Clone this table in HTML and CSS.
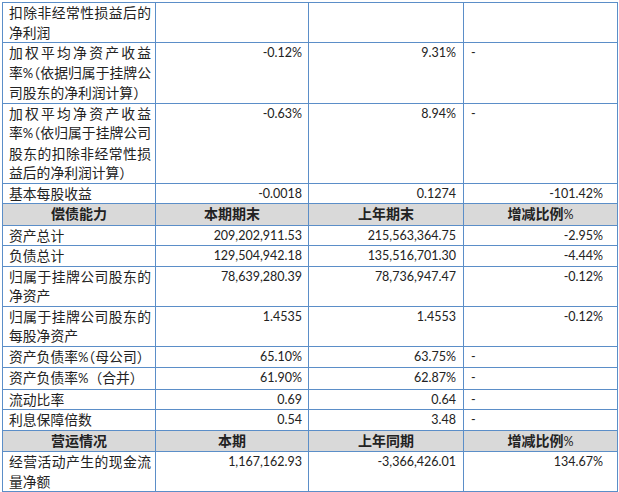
FILE: index.html
```html
<!DOCTYPE html>
<html lang="zh-CN">
<head>
<meta charset="utf-8">
<title>主要财务数据</title>
<link rel="stylesheet" href="styles.css">
</head>
<body>
<table class="fin">
  <colgroup><col class="c1"><col class="c2"><col class="c3"><col class="c4"></colgroup>
  <tbody>
    <tr>
      <td class="lbl"><span class="ln j">扣除非经常性损益后的</span><span class="ln">净利润</span></td>
      <td class="n"></td><td class="n"></td><td class="d"></td>
    </tr>
    <tr>
      <td class="lbl"><span class="ln j">加权平均净资产收益</span><span class="ln j">率<span class="pc">%</span><span class="half">（</span>依据归属于挂牌公</span><span class="ln">司股东的净利润计算）</span></td>
      <td class="n">-0.12%</td><td class="n">9.31%</td><td class="d">-</td>
    </tr>
    <tr>
      <td class="lbl"><span class="ln j">加权平均净资产收益</span><span class="ln j">率<span class="pc">%</span><span class="half">（</span>依归属于挂牌公司</span><span class="ln j">股东的扣除非经常性损</span><span class="ln">益后的净利润计算）</span></td>
      <td class="n">-0.63%</td><td class="n">8.94%</td><td class="d">-</td>
    </tr>
    <tr>
      <td class="lbl">基本每股收益</td>
      <td class="n">-0.0018</td><td class="n">0.1274</td><td class="n r">-101.42%</td>
    </tr>
    <tr class="hd">
      <td>偿债能力</td><td>本期期末</td><td>上年期末</td><td>增减比例<span class="pct">%</span></td>
    </tr>
    <tr>
      <td class="lbl">资产总计</td>
      <td class="n">209,202,911.53</td><td class="n">215,563,364.75</td><td class="n r">-2.95%</td>
    </tr>
    <tr>
      <td class="lbl">负债总计</td>
      <td class="n">129,504,942.18</td><td class="n">135,516,701.30</td><td class="n r">-4.44%</td>
    </tr>
    <tr>
      <td class="lbl"><span class="ln j">归属于挂牌公司股东的</span><span class="ln">净资产</span></td>
      <td class="n">78,639,280.39</td><td class="n">78,736,947.47</td><td class="n r">-0.12%</td>
    </tr>
    <tr>
      <td class="lbl"><span class="ln j">归属于挂牌公司股东的</span><span class="ln">每股净资产</span></td>
      <td class="n">1.4535</td><td class="n">1.4553</td><td class="n r">-0.12%</td>
    </tr>
    <tr>
      <td class="lbl"><span class="ln">资产负债率<span class="pc">%</span><span class="half">（</span>母公司）</span></td>
      <td class="n">65.10%</td><td class="n">63.75%</td><td class="d">-</td>
    </tr>
    <tr>
      <td class="lbl"><span class="ln">资产负债率<span class="pc">%</span>（合并）</span></td>
      <td class="n">61.90%</td><td class="n">62.87%</td><td class="d">-</td>
    </tr>
    <tr>
      <td class="lbl">流动比率</td>
      <td class="n">0.69</td><td class="n">0.64</td><td class="d">-</td>
    </tr>
    <tr>
      <td class="lbl">利息保障倍数</td>
      <td class="n">0.54</td><td class="n">3.48</td><td class="d">-</td>
    </tr>
    <tr class="hd">
      <td>营运情况</td><td>本期</td><td>上年同期</td><td>增减比例<span class="pct">%</span></td>
    </tr>
    <tr>
      <td class="lbl"><span class="ln j">经营活动产生的现金流</span><span class="ln">量净额</span></td>
      <td class="n">1,167,162.93</td><td class="n">-3,366,426.01</td><td class="n r">134.67%</td>
    </tr>
    <tr class="tail">
      <td class="lbl"></td><td class="n"></td><td class="n"></td><td class="d"></td>
    </tr>
  </tbody>
</table>
</body>
</html>
```

FILE: styles.css
```css
html, body {
  margin: 0;
  padding: 0;
  background: #ffffff;
}

.fin {
  border-collapse: collapse;
  table-layout: fixed;
  width: 615px;
  margin: 2px 0 0 2px;
  font-family: Lato, "Noto Sans CJK SC", sans-serif;
  color: #222222;
}

.c1 { width: 153px; }
.c2 { width: 153px; }
.c3 { width: 155px; }
.c4 { width: 154px; }

.fin td {
  border: 1px solid #5b8ec8;
  padding: 0 6px;
  line-height: 19.5px;
  height: 19.5px;
  vertical-align: top;
  font-size: 14px;
  overflow: hidden;
  white-space: nowrap;
}

.fin td.lbl {
  padding: 0 3px 0 6px;
  font-family: "Noto Sans CJK SC", sans-serif;
  font-size: 13.8px;
}

.ln {
  display: block;
  white-space: nowrap;
}

.ln.j {
  text-align: justify;
  text-align-last: justify;
  margin-right: 1px;
}

.pc {
  font-family: Lato, sans-serif;
  font-size: 13px;
}

.half {
  font-feature-settings: "halt";
}

.fin td.n {
  text-align: right;
  font-size: 12.5px;
  padding-right: 6px;
}

.fin td:nth-child(3).n {
  padding-right: 7px;
}

.fin td.n.r {
  padding-right: 14px;
}

.fin td.d {
  text-align: left;
  font-size: 12.5px;
  padding-left: 7px;
}

.hd td {
  background: #d9d9d9;
  text-align: center;
  font-weight: 700;
  font-family: "Noto Sans CJK SC", sans-serif;
}

.hd .pct {
  font-family: Lato, sans-serif;
  font-weight: 400;
  font-size: 12.5px;
}

.tail td {
  height: 20px;
}
```
